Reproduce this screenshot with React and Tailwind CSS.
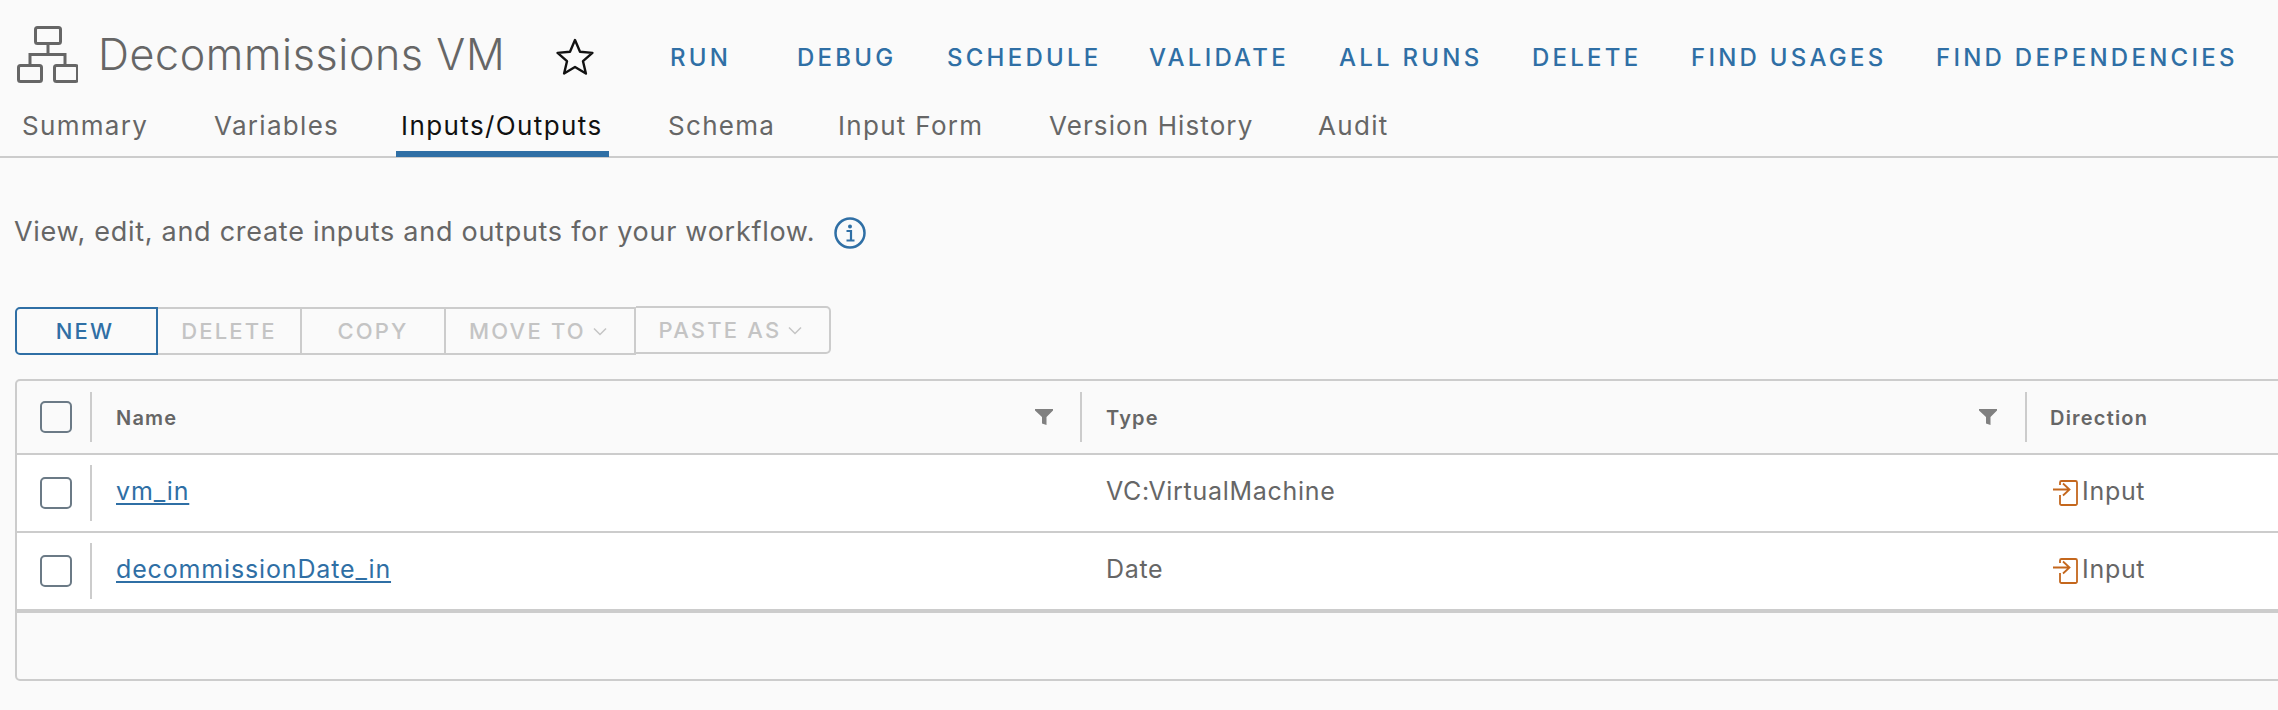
import React from "react";

const actions = [
  { label: "RUN", cls: "w-[57px] mr-[70px]" },
  { label: "DEBUG", cls: "w-[96px] mr-[54px]" },
  { label: "SCHEDULE", cls: "w-[148px] mr-[54px]" },
  { label: "VALIDATE", cls: "w-[137px] mr-[53px]" },
  { label: "ALL RUNS", cls: "w-[140px] mr-[53px]" },
  { label: "DELETE", cls: "w-[106px] mr-[53px]" },
  { label: "FIND USAGES", cls: "w-[192px] mr-[53px]" },
  { label: "FIND DEPENDENCIES", cls: "w-[298px]" },
];

const tabs = [
  { label: "Summary", cls: "w-[138px] mr-[54px] pl-[6px] tracking-[1.3px]" },
  { label: "Variables", cls: "w-[135px] mr-[53px] pl-[6px] tracking-[1.3px]" },
  { label: "Inputs/Outputs", cls: "w-[213px] mr-[53px] pl-[5px] tracking-[1.4px]", active: true },
  { label: "Schema", cls: "w-[117px] mr-[53px] pl-[6px] tracking-[1.3px]" },
  { label: "Input Form", cls: "w-[157px] mr-[54px] pl-[6px] tracking-[1.3px]" },
  { label: "Version History", cls: "w-[215px] mr-[54px] pl-[6px] tracking-[1.1px]" },
  { label: "Audit", cls: "w-[84px] pl-[6px] tracking-[1.3px]" },
];

const rows = [
  { name: "vm_in", type: "VC:VirtualMachine" },
  { name: "decommissionDate_in", type: "Date" },
];

const WorkflowIcon = () => (
  <svg width="61" height="57" viewBox="0 0 61 57" fill="none" stroke="#666" strokeWidth="3" className="shrink-0">
    <rect x="18.5" y="1.500" width="25" height="16" rx="2" />
    <rect x="1.500" y="39.500" width="23" height="16" rx="2" />
    <rect x="37.500" y="39.500" width="23" height="16" rx="2" />
    <path d="M31 18v10M13 39V28.500h35V39" />
  </svg>
);

const Star = () => (
  <svg width="38" height="37" viewBox="0 0 38 37" fill="none" stroke="#111" strokeWidth="2.400" strokeLinejoin="round" className="shrink-0">
    <path d="M19 2l5 11.800 12.400 1.100-9.400 8.300 2.900 12.300L19 29l-10.900 6.500 2.900-12.300-9.400-8.300L14 13.800z" />
  </svg>
);

const InfoIcon = () => (
  <svg width="32" height="32" viewBox="0 0 32 32" fill="none" className="shrink-0">
    <circle cx="16" cy="16" r="14.500" stroke="#2f6fa5" strokeWidth="2.500" />
    <circle cx="16" cy="9.500" r="2" fill="#2f6fa5" />
    <path d="M12.500 14h4.500v9M12.500 23.500h8" stroke="#2f6fa5" strokeWidth="2.200" />
  </svg>
);

const Filter = () => (
  <svg width="18" height="16" viewBox="0 0 18 16" fill="#808080" className="shrink-0">
    <path d="M0 0h18v1.500l-6.500 6.500v8l-4.500-1.500V8L0 1.500z" />
  </svg>
);

const InputIcon = () => (
  <svg width="25" height="26" viewBox="0 0 25 26" fill="none" stroke="#c4671d" strokeWidth="1.800" className="shrink-0">
    <path d="M7 5V2.500a1.500 1.500 0 0 1 1.500-1.500h14a1.500 1.500 0 0 1 1.500 1.500v21a1.500 1.500 0 0 1-1.500 1.500h-14a1.500 1.500 0 0 1-1.500-1.500V15" />
    <path d="M0 9.500h16.500M10 3.500l6.500 6-6.500 6" />
  </svg>
);

const Chevron = () => (
  <svg width="14" height="9" viewBox="0 0 14 9" fill="none" stroke="#c4c4c4" strokeWidth="1.500" className="shrink-0">
    <path d="M1 1.500l6 6 6-6" />
  </svg>
);

const Divider = ({ cls }) => <div className={`w-[2px] shrink-0 bg-[#ccc] ${cls}`} />;

const Checkbox = () => (
  <div className="w-[32px] h-[32px] rounded-[5px] border-2 border-[#6b7a86] bg-transparent" />
);

const App = () => {
  return (
    <div className="w-[2278px] h-[710px] overflow-hidden bg-[#fafafa] font-['Inter',sans-serif] text-[#666]">
      {/* TITLE + ACTIONS */}
      <div className="flex items-center h-[108px] pl-[17px]">
        <WorkflowIcon />
        <h1 className="ml-[20px] w-[407px] shrink-0 text-[43px] font-light whitespace-nowrap tracking-[0.6px] text-[#666]">
          Decommissions VM
        </h1>
        <div className="ml-[51px] mt-[4px]">
          <Star />
        </div>
        <div className="flex ml-[76px] mt-[7px]">
          {actions.map((a) => (
            <div
              key={a.label}
              className={`shrink-0 whitespace-nowrap text-[24px] font-medium tracking-[3.25px] text-[#2f6fa5] ${a.cls}`}
            >
              {a.label}
            </div>
          ))}
        </div>
      </div>

      {/* TABS */}
      <div className="flex h-[50px] pl-[16px] border-b-2 border-[#ccc]">
        {tabs.map((t) => (
          <div
            key={t.label}
            className={`h-[49px] shrink-0 pt-[2px] whitespace-nowrap text-[26px] leading-[32px] border-b-[6px] ${t.cls} ${
              t.active ? "border-[#2f6fa5] text-[#111]" : "border-transparent text-[#666]"
            }`}
          >
            {t.label}
          </div>
        ))}
      </div>

      {/* DESCRIPTION */}
      <div className="flex items-center mt-[60px] pl-[14px] h-[32px]">
        <p className="w-[801px] shrink-0 -mt-[3px] whitespace-nowrap text-[27px] tracking-[0.72px]">
          View, edit, and create inputs and outputs for your workflow.
        </p>
        <div className="ml-[19px] -mt-[2px]">
          <InfoIcon />
        </div>
      </div>

      {/* TOOLBAR */}
      <div className="flex items-start mt-[57px] pl-[15px] h-[48px] text-[22px] font-medium tracking-[2.2px] text-[#c4c4c4]">
        <div className="w-[143px] h-[48px] flex items-center justify-center pr-[3px] rounded-l-[5px] border-2 border-[#2f6fa5] text-[#2f6fa5]">
          NEW
        </div>
        <div className="w-[144px] h-[48px] flex items-center justify-center border-2 border-l-0 border-[#ccc]">DELETE</div>
        <div className="w-[144px] h-[48px] flex items-center justify-center border-2 border-l-0 border-[#ccc]">COPY</div>
        <div className="w-[190px] h-[48px] flex items-center justify-center gap-[7px] pr-[4px] border-2 border-l-0 border-[#ccc]">
          MOVE TO <Chevron />
        </div>
        <div className="w-[195px] h-[48px] -mt-[1px] flex items-center justify-center gap-[7px] pr-[4px] rounded-r-[5px] border-2 border-l-0 border-[#ccc]">
          PASTE AS <Chevron />
        </div>
      </div>

      {/* TABLE */}
      <div className="mt-[24px] ml-[15px] w-[2400px] h-[302px] rounded-[5px] border-2 border-[#ccc]">
        <div className="flex items-center h-[74px] border-b-2 border-[#ccc] text-[20px] font-semibold tracking-[1.2px] text-[#666]">
          <div className="w-[73px] flex justify-center pl-[5px] shrink-0">
            <Checkbox />
          </div>
          <Divider cls="h-[50px]" />
          <div className="w-[988px] flex items-center justify-between pl-[24px] pr-[27px] shrink-0">
            <span className="pt-[2px]">Name</span> <Filter />
          </div>
          <Divider cls="h-[50px]" />
          <div className="w-[943px] flex items-center justify-between pl-[24px] pr-[28px] shrink-0">
            <span className="pt-[2px]">Type</span> <Filter />
          </div>
          <Divider cls="h-[50px]" />
          <div className="pl-[23px] pt-[2px]">Direction</div>
        </div>

        {rows.map((r, i) => (
          <div
            key={r.name}
            className={`flex items-center bg-white text-[25px] tracking-[0.7px] ${
              i === 1 ? "h-[80px] border-b-4" : "h-[78px] border-b-2"
            } border-[#ccc]`}
          >
            <div className="w-[73px] flex justify-center pl-[5px] shrink-0">
              <Checkbox />
            </div>
            <Divider cls="h-[56px]" />
            <div className="w-[991px] pl-[24px] pb-[3px] shrink-0">
              <a className="text-[#2f6fa5] tracking-[0.85px] underline underline-offset-[3px]">{r.name}</a>
            </div>
            <div className="w-[945px] pl-[23px] pb-[3px] shrink-0">{r.type}</div>
            <div className="flex items-center gap-[4px] pl-[25px]">
              <InputIcon />
              <span className="pb-[3px]">Input</span>
            </div>
          </div>
        ))}
      </div>
    </div>
  );
};

export default App;
